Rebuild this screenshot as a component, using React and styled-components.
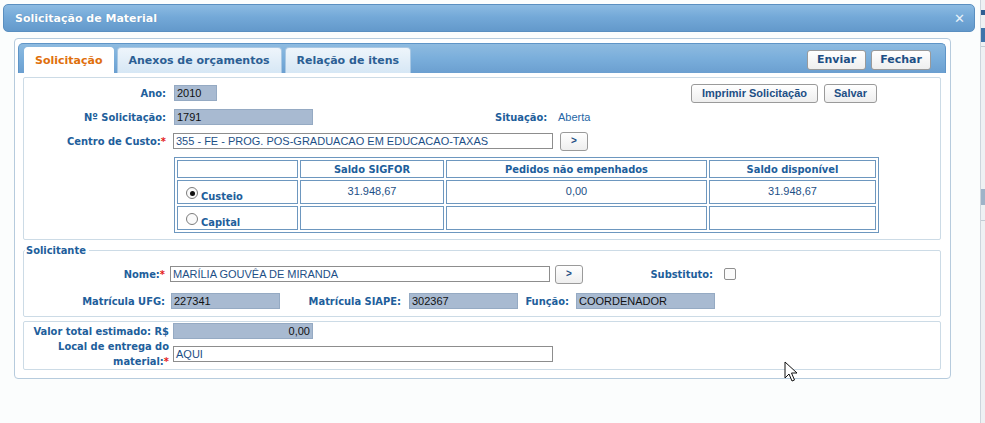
import styled, { createGlobalStyle } from 'styled-components';

const GlobalStyle = createGlobalStyle`
  html, body {
    margin: 0;
    padding: 0;
    background: #fbfdfd;
  }
  #root {
    height: 423px;
    overflow: hidden;
  }
`;

const labelFont = "'DejaVu Sans Condensed', 'DejaVu Sans', Verdana, sans-serif";

const Page = styled.div`
  display: flex;
  width: 985px;
  height: 423px;
  position: relative;
  font-family: 'DejaVu Sans', Verdana, sans-serif;
`;

const Dialog = styled.div`
  width: 980px;
  padding: 4px 0 0 0;
  background: #fbfdfd;
  box-sizing: border-box;
`;

const Backdrop = styled.div`
  flex: 1;
  border-left: 1px solid #cdd5dc;
  background: #eef1f3;
  display: flex;
  flex-direction: column;
`;

const BackBlock = styled.div`
  height: ${(p) => p.h}px;
  margin-top: ${(p) => p.mt}px;
  background: ${(p) => p.c};
`;

const TitleBar = styled.div`
  margin-left: 3px;
  width: 972px;
  height: 28px;
  box-sizing: border-box;
  border: 1px solid #5a8fc0;
  border-radius: 5px;
  background: linear-gradient(#8cbbe2 0%, #74a9d8 45%, #6399cb 100%);
  display: flex;
  align-items: center;
  justify-content: space-between;
  padding: 0 9px 0 11px;
`;

const Title = styled.span`
  color: #ffffff;
  font-weight: bold;
  font-size: 11px;
  text-shadow: 0 0 1px rgba(40, 80, 120, 0.4);
`;

const Close = styled.span`
  color: #e8f1f8;
  font-weight: bold;
  font-size: 13px;
`;

const Panel = styled.div`
  margin: 6px 0 0 14px;
  width: 937px;
  height: 341px;
  box-sizing: border-box;
  border: 1px solid #b6cbdd;
  border-radius: 4px;
  padding: 4px 4px 0 3px;
  background: #ffffff;
`;

const TabBar = styled.div`
  height: 30px;
  box-sizing: border-box;
  border: 1px solid #5f95c7;
  border-bottom: none;
  border-radius: 5px 5px 0 0;
  background: linear-gradient(#8ebbe0 0%, #7aaedb 50%, #6b9fd0 100%);
  display: flex;
  align-items: flex-end;
  padding: 0 14px 0 5px;
`;

const Tab = styled.div`
  height: 26px;
  box-sizing: border-box;
  margin-right: 3px;
  padding: 0 ${(p) => (p.active ? 10 : 11)}px;
  display: flex;
  align-items: center;
  border-radius: 4px 4px 0 0;
  font-size: 11px;
  font-weight: bold;
  color: ${(p) => (p.active ? '#e0700c' : '#2c5f94')};
  background: ${(p) =>
    p.active ? '#ffffff' : 'linear-gradient(#eef5fb, #d6e7f5)'};
  border: 1px solid ${(p) => (p.active ? '#ffffff' : '#a9c8e4')};
  border-bottom: none;
`;

const TabActions = styled.div`
  margin-left: auto;
  align-self: center;
  display: flex;
  gap: 5px;
  padding-top: 2px;
`;

const Button = styled.button`
  height: 19px;
  width: ${(p) => (p.w ? `${p.w}px` : 'auto')};
  padding: 0;
  border: 1px solid #9a9a9a;
  border-radius: 3px;
  background: linear-gradient(#ffffff, #eeeeee);
  color: #1e4f85;
  font-family: 'Liberation Sans', Arial, sans-serif;
  font-weight: bold;
  font-size: 11px;
  white-space: nowrap;
  cursor: pointer;
  line-height: 1;
`;

const TabButton = styled(Button)`
  height: 20px;
  font-family: 'DejaVu Sans', Verdana, sans-serif;
`;

const Fieldset = styled.fieldset`
  margin: ${(p) => p.mt}px 5px 0 5px;
  padding: ${(p) => p.pad};
  border: 1px solid #ccdbe6;
  border-radius: 2px;
  box-sizing: border-box;
`;

const Legend = styled.legend`
  padding: 0 3px 0 1px;
  margin-left: 1px;
  font-family: ${labelFont};
  font-size: 11px;
  font-weight: bold;
  color: #215e9b;
`;

const Row = styled.div`
  display: flex;
  align-items: ${(p) => (p.top ? 'flex-start' : 'center')};
  height: ${(p) => p.h ?? 16}px;
  margin-top: ${(p) => p.mt ?? 0}px;
`;

const Label = styled.span`
  width: ${(p) => p.w}px;
  margin-left: ${(p) => p.ml ?? 0}px;
  margin-right: ${(p) => p.mr ?? 8}px;
  text-align: right;
  font-family: ${labelFont};
  font-size: 11px;
  font-weight: bold;
  color: #215e9b;
  white-space: nowrap;
  flex-shrink: 0;
  line-height: 15px;
`;

const Req = styled.span`
  color: #e41b1b;
`;

const Input = styled.div`
  width: ${(p) => p.w}px;
  height: 16px;
  margin-top: ${(p) => p.mt ?? 0}px;
  box-sizing: border-box;
  border: 1px solid ${(p) => (p.ro ? '#95aac3' : '#8d8d8d')};
  background: ${(p) => (p.ro ? '#a8bad1' : '#ffffff')};
  color: ${(p) => (p.ro ? '#111111' : '#1d4f86')};
  font-family: 'Liberation Sans', Arial, sans-serif;
  font-size: 11px;
  line-height: 14px;
  padding: 0 2px;
  text-align: ${(p) => (p.right ? 'right' : 'left')};
  white-space: nowrap;
  overflow: hidden;
  flex-shrink: 0;
`;

const Plain = styled.span`
  font-family: 'Liberation Sans', Arial, sans-serif;
  font-size: 11px;
  color: #2566a6;
`;

const SmallBtn = styled(Button)`
  width: 28px;
  margin-left: ${(p) => p.ml}px;
  font-size: 10px;
`;

const Spacer = styled.div`
  flex: 1;
`;

const RightButtons = styled.div`
  display: flex;
  gap: 6px;
  margin-right: 63px;
`;

const Table = styled.table`
  margin: 8px 0 0 150px;
  border: 1px solid #6d97bf;
  border-spacing: 2px;
  width: 705px;
  font-family: ${labelFont};
  font-size: 11px;
`;

const Th = styled.th`
  border: 1px solid #6d97bf;
  height: 16px;
  padding: 0;
  color: #215e9b;
  font-weight: bold;
  width: ${(p) => (p.w ? `${p.w}px` : 'auto')};
`;

const Td = styled.td`
  border: 1px solid #6d97bf;
  height: 19px;
  padding: 2px 0 0 0;
  text-align: center;
  vertical-align: top;
  font-family: 'Liberation Sans', Arial, sans-serif;
  font-size: 11px;
  color: #1d4f86;
  line-height: 16px;
`;

const RadioCell = styled.td`
  border: 1px solid #6d97bf;
  height: 21px;
  padding: 0 0 0 8px;
  vertical-align: top;
`;

const RadioWrap = styled.div`
  display: flex;
  align-items: flex-start;
  gap: 3px;
  font-weight: bold;
  color: #215e9b;
  font-size: 11px;
  padding-top: 6px;
`;

const RadioText = styled.span`
  margin-top: 3px;
  line-height: 13px;
`;

const Radio = styled.span`
  width: 10px;
  height: 10px;
  border: 1px solid #7c7c7c;
  border-radius: 50%;
  background: #fafafa;
  display: flex;
  align-items: center;
  justify-content: center;
  &::after {
    content: '';
    width: 5px;
    height: 5px;
    border-radius: 50%;
    background: ${(p) => (p.checked ? '#111' : 'transparent')};
  }
`;

const Checkbox = styled.span`
  width: 10px;
  height: 10px;
  border: 1px solid #8f8f8f;
  border-radius: 2px;
  background: #fbfbfb;
  margin-left: 11px;
`;

const Cursor = styled.svg`
  position: absolute;
  left: 784px;
  top: 361px;
`;

export default function App() {
  return (
    <Page>
      <GlobalStyle />
      <Dialog>
        <TitleBar>
          <Title>Solicitação de Material</Title>
          <Close>✕</Close>
        </TitleBar>
        <Panel>
          <TabBar>
            <Tab active>Solicitação</Tab>
            <Tab>Anexos de orçamentos</Tab>
            <Tab>Relação de itens</Tab>
            <TabActions>
              <TabButton w={59}>Enviar</TabButton>
              <TabButton w={60}>Fechar</TabButton>
            </TabActions>
          </TabBar>

          <Fieldset mt={4} pad="7px 0 6px 0">
            <Row>
              <Label w={142}>Ano:</Label>
              <Input ro w={43}>2010</Input>
              <Spacer />
              <RightButtons>
                <Button w={127}>Imprimir Solicitação</Button>
                <Button w={53}>Salvar</Button>
              </RightButtons>
            </Row>
            <Row mt={8}>
              <Label w={142}>Nº Solicitação:</Label>
              <Input ro w={139}>1791</Input>
              <Label w={52} ml={182} mr={11}>Situação:</Label>
              <Plain>Aberta</Plain>
            </Row>
            <Row mt={8}>
              <Label w={142} mr={7}>
                Centro de Custo:<Req>*</Req>
              </Label>
              <Input w={380}>355 - FE - PROG. POS-GRADUACAO EM EDUCACAO-TAXAS</Input>
              <SmallBtn ml={7}>&gt;</SmallBtn>
            </Row>
            <Table>
              <thead>
                <tr>
                  <Th w={119}></Th>
                  <Th w={142}>Saldo SIGFOR</Th>
                  <Th w={259}>Pedidos não empenhados</Th>
                  <Th>Saldo disponível</Th>
                </tr>
              </thead>
              <tbody>
                <tr>
                  <RadioCell>
                    <RadioWrap>
                      <Radio checked />
                      <RadioText>Custeio</RadioText>
                    </RadioWrap>
                  </RadioCell>
                  <Td>31.948,67</Td>
                  <Td>0,00</Td>
                  <Td>31.948,67</Td>
                </tr>
                <tr>
                  <RadioCell>
                    <RadioWrap>
                      <Radio />
                      <RadioText>Capital</RadioText>
                    </RadioWrap>
                  </RadioCell>
                  <Td></Td>
                  <Td></Td>
                  <Td></Td>
                </tr>
              </tbody>
            </Table>
          </Fieldset>

          <Fieldset mt={4} pad="8px 0 7px 0">
            <Legend>Solicitante</Legend>
            <Row h={18}>
              <Label w={141} mr={5}>
                Nome:<Req>*</Req>
              </Label>
              <Input w={380}>MARÍLIA GOUVÊA DE MIRANDA</Input>
              <SmallBtn ml={5}>&gt;</SmallBtn>
              <Label w={64} ml={66} mr={0}>Substituto:</Label>
              <Checkbox />
            </Row>
            <Row mt={10}>
              <Label w={141} mr={6}>Matrícula UFG:</Label>
              <Input ro w={109}>227341</Input>
              <Label w={93} ml={28} mr={8}>Matrícula SIAPE:</Label>
              <Input ro w={109}>302367</Input>
              <Label w={45} ml={6} mr={7}>Função:</Label>
              <Input ro w={139}>COORDENADOR</Input>
            </Row>
          </Fieldset>

          <Fieldset mt={4} pad="1px 0 0 0">
            <Row>
              <Label w={145} mr={4}>Valor total estimado: R$</Label>
              <Input ro right w={140}>0,00</Input>
            </Row>
            <Row h={30} top>
              <Label w={145} mr={4}>
                Local de entrega do
                <br />
                material:<Req>*</Req>
              </Label>
              <Input w={380} mt={7}>AQUI</Input>
            </Row>
          </Fieldset>
        </Panel>
      </Dialog>
      <Backdrop>
        <BackBlock mt={10} h={5} c="#2f5f93" />
        <BackBlock mt={13} h={14} c="#3f74aa" />
        <BackBlock mt={4} h={1} c="#c3ccd4" />
        <BackBlock mt={142} h={16} c="#9fb3c8" />
        <BackBlock mt={15} h={1} c="#c3ccd4" />
      </Backdrop>
      <Cursor width="14" height="22" viewBox="0 0 14 22">
        <path
          d="M1 1 L1 17 L5 13 L8 20 L10.5 19 L7.5 12 L13 12 Z"
          fill="#ffffff"
          stroke="#111111"
          strokeWidth="1"
          strokeLinejoin="round"
        />
      </Cursor>
    </Page>
  );
}
